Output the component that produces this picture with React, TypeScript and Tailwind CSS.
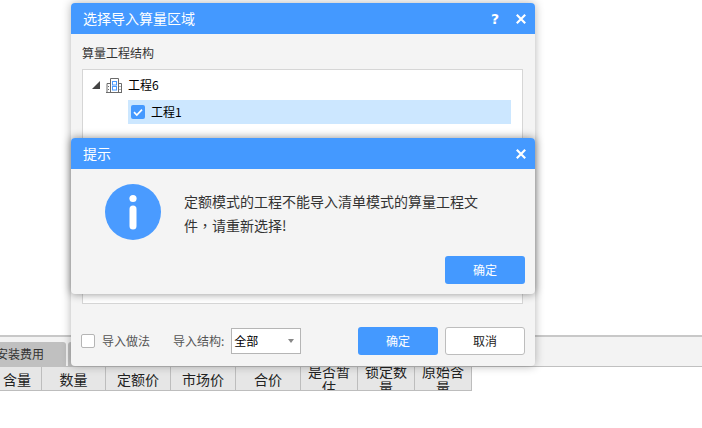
import React from 'react';

const FONT = "font-['Noto_Sans_CJK_SC','Noto_Sans',sans-serif]";

const columns = [
  { label: '含量', width: 'w-[42px]', align: 'pl-[3px] justify-start' },
  { label: '数量', width: 'w-[64px]', align: 'justify-center' },
  { label: '定额价', width: 'w-[65px]', align: 'justify-center' },
  { label: '市场价', width: 'w-[65px]', align: 'justify-center' },
  { label: '合价', width: 'w-[65px]', align: 'justify-center' },
  { label: '是否暂估', width: 'w-[57px]', align: 'justify-center px-[6px]' },
  { label: '锁定数量', width: 'w-[57px]', align: 'justify-center px-[6px]' },
  { label: '原始含量', width: 'w-[57px]', align: 'justify-center px-[6px]' },
];

const CloseIcon = () => (
  <svg width="10" height="10" viewBox="0 0 10 10" fill="none" stroke="#ffffff" strokeWidth="2.2">
    <path d="M0.8 0.8l8.4 8.4M9.2 0.8l-8.4 8.4" />
  </svg>
);

const BuildingIcon = () => (
  <svg width="16" height="16" viewBox="0 0 16 16" fill="none" stroke="#6b6b6b" strokeWidth="1">
    <path d="M4.5 15.5V1.5h8v14M4.5 6.5h-3.5v9M12.5 6.5h3v9M0 15.5h16" />
    <path d="M2.5 9v1M2.5 12v1M14 9v1M14 12v1" />
    <rect x="6.5" y="4.5" width="4" height="3.5" stroke="#4a9bff" />
    <rect x="6.5" y="9.5" width="4" height="3.5" stroke="#4a9bff" />
  </svg>
);

const CheckIcon = () => (
  <svg width="14" height="14" viewBox="0 0 14 14">
    <rect width="14" height="14" rx="2" fill="#4499ff" />
    <path d="M3 7.2l2.8 2.8L11 4.6" fill="none" stroke="#ffffff" strokeWidth="1.7" />
  </svg>
);

const InfoIcon = () => (
  <svg width="56" height="56" viewBox="0 0 56 56">
    <circle cx="28" cy="28" r="28" fill="#4a9bff" />
    <circle cx="28" cy="14.5" r="3.6" fill="#ffffff" />
    <rect x="24.5" y="21.5" width="7" height="24" rx="3.5" fill="#ffffff" />
  </svg>
);

const DialogHeader = ({ title, help }: { title: string; help?: boolean }) => (
  <div className="h-[31px] flex items-center bg-[#4499ff] rounded-t-[4px] pl-3 pr-[9px] text-white text-sm">
    <span className="flex-1 -mt-[1px]">{title}</span>
    {help && <span className="w-[10px] mr-[16px] text-center text-sm font-bold font-['DejaVu_Sans',sans-serif]">?</span>}
    <CloseIcon />
  </div>
);

export default function App() {
  return (
    <div className={`relative w-[702px] h-[428px] overflow-hidden bg-white ${FONT}`}>
      {/* page behind the dialogs */}
      <div className="h-[335px]" />
      <div className="h-[32px] border-t-2 border-[#c8c8c8] border-b border-b-[#c0c0c0] bg-[#f3f3f3] flex items-end gap-[2px]">
        <div className="w-[66px] h-[24px] bg-[#c0c0c0] rounded-tr-[3px] text-xs text-[#333] leading-[24px] overflow-hidden whitespace-nowrap -indent-[4px]">
          安装费用
        </div>
        <div className="w-[66px] h-[24px] bg-[#c0c0c0] rounded-t-[3px]" />
      </div>
      <div className="flex w-[472px] h-[24px] bg-[#e6e6e6] border-b border-[#bdbdbd]">
        {columns.map((col) => (
          <div
            key={col.label}
            className={`${col.width} ${col.align} flex items-center border-r border-[#bdbdbd] h-[23px] text-sm text-[#222] leading-[16px] overflow-hidden`}
          >
            <span className="block text-center">{col.label}</span>
          </div>
        ))}
      </div>

      {/* import dialog */}
      <div className="absolute left-[71px] top-[3px] w-[464px] h-[363px] flex flex-col bg-[#f4f4f4] rounded-[4px] shadow-[0_0_10px_rgba(0,0,0,0.3)]">
        <DialogHeader title="选择导入算量区域" help />
        <div className="flex-1 flex flex-col px-[11px]">
          <div className="h-[35px] pt-[2px] flex items-center text-xs text-[#333]">算量工程结构</div>
          <div className="h-[235px] w-[441px] bg-white border border-[#d6d6d6] pl-[9px] pr-[11px] pt-[4px]">
            <div className="h-[22px] mb-[4px] flex items-center text-xs text-black">
              <span className="w-0 h-0 border-l-[8px] border-l-transparent border-b-[8px] border-b-[#444] mr-[6px]" />
              <BuildingIcon />
              <span className="ml-[6px]">工程6</span>
            </div>
            <div className="h-[24px] ml-[36px] flex items-center bg-[#cce7ff] pl-[3px] text-xs text-black">
              <CheckIcon />
              <span className="ml-[6px]">工程1</span>
            </div>
          </div>
          <div className="flex-1 flex items-center pt-[12px] -ml-[1px] -mr-[1px] text-xs text-[#555]">
            <span className="w-[14px] h-[14px] bg-white border border-[#b5b5b5] rounded-[2px] mr-[7px]" />
            <span className="mr-[23px]">导入做法</span>
            <span className="mr-[7px]">导入结构:</span>
            <div className="w-[70px] h-[26px] bg-white border border-[#b5b5b5] flex items-center pl-[2px] pr-[6px] text-black">
              <span className="flex-1">全部</span>
              <span className="w-0 h-0 border-x-[3px] border-x-transparent border-t-[4px] border-t-[#888]" />
            </div>
            <button className="w-[80px] h-[28px] ml-auto bg-[#4499ff] rounded-[3px] text-white text-xs">确定</button>
            <button className="w-[80px] h-[28px] ml-[7px] bg-white border border-[#bdbdbd] rounded-[3px] text-[#222] text-xs">取消</button>
          </div>
        </div>
      </div>

      {/* message box */}
      <div className="absolute left-[71px] top-[138px] w-[464px] h-[156px] flex flex-col bg-[#f4f4f4] rounded-[4px] shadow-[0_0_8px_rgba(0,0,0,0.45)]">
        <DialogHeader title="提示" />
        <div className="flex-1 flex flex-col px-[10px]">
          <div className="h-[87px] flex pl-[24px] pt-[15px]">
            <InfoIcon />
            <p className="ml-[23px] w-[296px] pt-[5px] text-sm leading-[24px] text-[#333]">
              定额模式的工程不能导入清单模式的算量工程文件<span className="font-['Noto_Sans_CJK_TC',sans-serif]">，</span>请重新选择!
            </p>
          </div>
          <button className="w-[80px] h-[28px] ml-auto bg-[#4499ff] rounded-[3px] text-white text-xs">确定</button>
        </div>
      </div>
    </div>
  );
}
